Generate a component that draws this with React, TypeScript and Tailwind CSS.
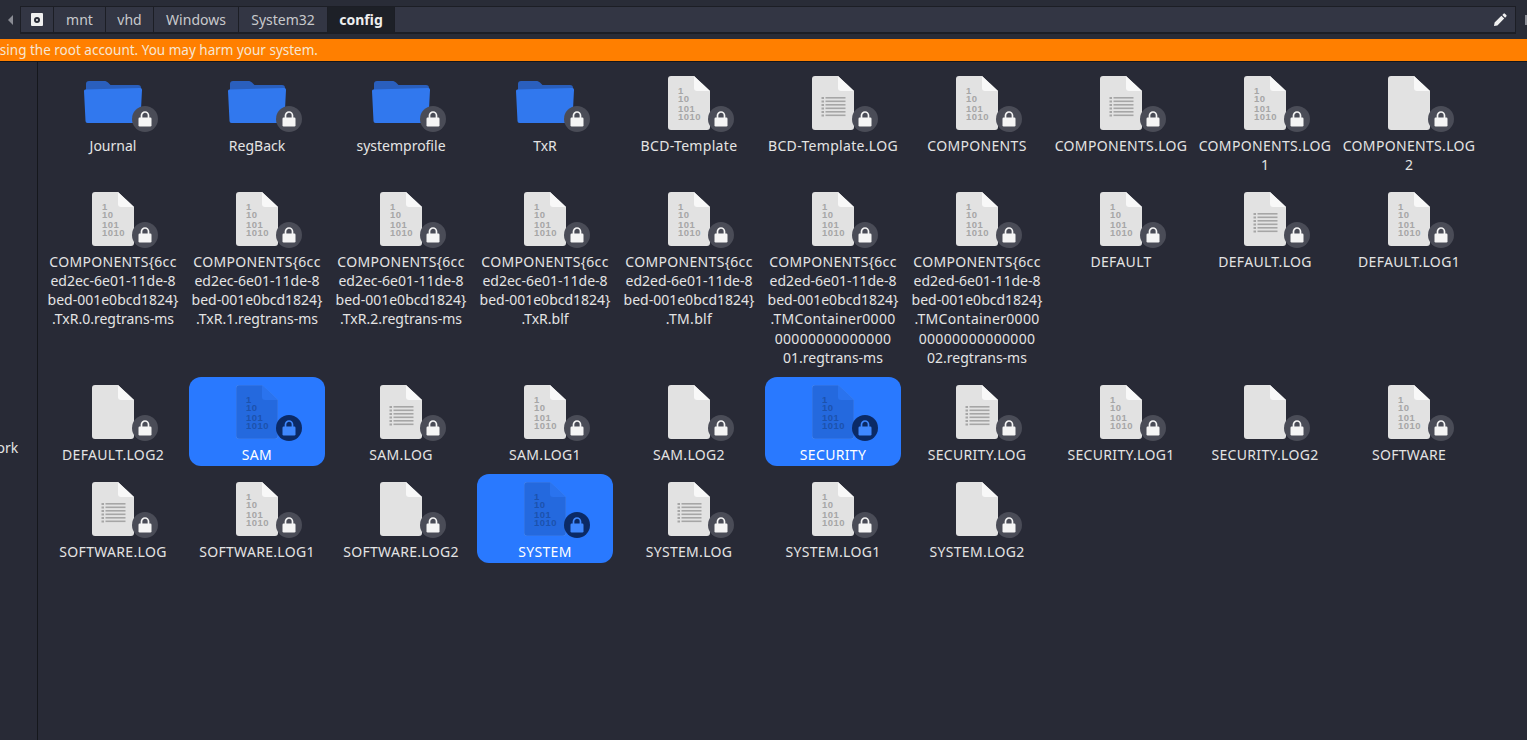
const font = { fontFamily: '"Noto Sans", sans-serif' }

type Kind = "folder" | "bin" | "log" | "blank"
type Item = { lines: string[]; kind: Kind; selected?: boolean }

const comp = (mid: string, last: string[]) => ["COMPONENTS{6cc", mid, "bed-001e0bcd1824}", ...last]

const items: Item[] = [
  { lines: ["Journal"], kind: "folder" },
  { lines: ["RegBack"], kind: "folder" },
  { lines: ["systemprofile"], kind: "folder" },
  { lines: ["TxR"], kind: "folder" },
  { lines: ["BCD-Template"], kind: "bin" },
  { lines: ["BCD-Template.LOG"], kind: "log" },
  { lines: ["COMPONENTS"], kind: "bin" },
  { lines: ["COMPONENTS.LOG"], kind: "log" },
  { lines: ["COMPONENTS.LOG", "1"], kind: "bin" },
  { lines: ["COMPONENTS.LOG", "2"], kind: "blank" },
  { lines: comp("ed2ec-6e01-11de-8", [".TxR.0.regtrans-ms"]), kind: "bin" },
  { lines: comp("ed2ec-6e01-11de-8", [".TxR.1.regtrans-ms"]), kind: "bin" },
  { lines: comp("ed2ec-6e01-11de-8", [".TxR.2.regtrans-ms"]), kind: "bin" },
  { lines: comp("ed2ec-6e01-11de-8", [".TxR.blf"]), kind: "bin" },
  { lines: comp("ed2ed-6e01-11de-8", [".TM.blf"]), kind: "bin" },
  { lines: comp("ed2ed-6e01-11de-8", [".TMContainer0000", "00000000000000", "01.regtrans-ms"]), kind: "bin" },
  { lines: comp("ed2ed-6e01-11de-8", [".TMContainer0000", "00000000000000", "02.regtrans-ms"]), kind: "bin" },
  { lines: ["DEFAULT"], kind: "bin" },
  { lines: ["DEFAULT.LOG"], kind: "log" },
  { lines: ["DEFAULT.LOG1"], kind: "bin" },
  { lines: ["DEFAULT.LOG2"], kind: "blank" },
  { lines: ["SAM"], kind: "bin", selected: true },
  { lines: ["SAM.LOG"], kind: "log" },
  { lines: ["SAM.LOG1"], kind: "bin" },
  { lines: ["SAM.LOG2"], kind: "blank" },
  { lines: ["SECURITY"], kind: "bin", selected: true },
  { lines: ["SECURITY.LOG"], kind: "log" },
  { lines: ["SECURITY.LOG1"], kind: "bin" },
  { lines: ["SECURITY.LOG2"], kind: "blank" },
  { lines: ["SOFTWARE"], kind: "bin" },
  { lines: ["SOFTWARE.LOG"], kind: "log" },
  { lines: ["SOFTWARE.LOG1"], kind: "bin" },
  { lines: ["SOFTWARE.LOG2"], kind: "blank" },
  { lines: ["SYSTEM"], kind: "bin", selected: true },
  { lines: ["SYSTEM.LOG"], kind: "log" },
  { lines: ["SYSTEM.LOG1"], kind: "bin" },
  { lines: ["SYSTEM.LOG2"], kind: "blank" },
]

function Folder() {
  return (
    <svg width="58" height="42" viewBox="0 0 58 42" className="block">
      <path d="M2 3a3 3 0 0 1 3-3h15c2 0 3 .6 4 1.500L26.500 4H54a3 3 0 0 1 3 3v8H2z" fill="#2a5fbd" />
      <path d="M1.200 8.500 55.500 7a2 2 0 0 1 2.500 2l-1.600 31a2 2 0 0 1-2 2H3.500a2 2 0 0 1-2-2L0 10a1.500 1.500 0 0 1 1.200-1.500z" fill="#3178ee" />
    </svg>
  )
}

function Doc({ kind, selected }: { kind: Kind; selected?: boolean }) {
  const body = selected ? "#2469de" : "#e2e2e2"
  const fold = selected ? "#2a73ee" : "#f8f8f8"
  const ink = selected ? "#1c52ad" : "#a6a6a6"
  const edge = selected ? "#4a8cf5" : "none"
  return (
    <svg width="42" height="54" viewBox="0 0 42 54" className="block">
      <path d="M3 0h23l16 15v36a3 3 0 0 1-3 3H3a3 3 0 0 1-3-3V3a3 3 0 0 1 3-3z" fill={body} stroke={edge} strokeWidth="0.600" />
      <path d="M26 0l16 15H29a3 3 0 0 1-3-3z" fill={fold} />
      {kind === "bin" && (
        <text opacity="0.99" fontFamily='"Liberation Sans", sans-serif' fontWeight="700" fontSize="9.500" letterSpacing="0.500" fill={ink}>
          <tspan x="10" y="18">1</tspan>
          <tspan x="10" y="26">10</tspan>
          <tspan x="10" y="36">101</tspan>
          <tspan x="10" y="44">1010</tspan>
        </text>
      )}
      {kind === "log" && (
        <g fill={ink}>
          {[21, 24.500, 28, 31.500, 35, 38.500].map((y) => (
            <g key={y}>
              <rect x="9.500" y={y} width="2.500" height="2" />
              <rect x="13.500" y={y} width="20" height="1.600" />
            </g>
          ))}
        </g>
      )}
    </svg>
  )
}

function LockBadge({ selected }: { selected?: boolean }) {
  const color = selected ? "#3f88ff" : "#f5f5f5"
  return (
    <div className={`flex h-[26px] w-[26px] items-center justify-center rounded-full ${selected ? "bg-[#0b2a66]" : "bg-[#4a4c57]"}`}>
      <svg width="14" height="16" viewBox="0 0 14 16" className="block">
        <path d="M3.500 7V4.500a3.500 3.500 0 0 1 7 0V7" fill="none" stroke={color} strokeWidth="1.700" />
        <rect x="0.500" y="6.500" width="13" height="9" rx="1.200" fill={color} />
      </svg>
    </div>
  )
}

function FileItem({ item }: { item: Item }) {
  const folder = item.kind === "folder"
  return (
    <div className={`flex flex-col items-center rounded-xl pb-[1.800px] pt-2 ${item.selected ? "bg-[#2979ff] text-white" : "text-[#e4e4e4]"}`}>
      <div className="relative flex h-[60px] w-full justify-center">
        <div className={folder ? "pt-[5px]" : ""}>
          {folder ? <Folder /> : <Doc kind={item.kind} selected={item.selected} />}
        </div>
        <div className="absolute left-[87px] top-[30px]">
          <LockBadge selected={item.selected} />
        </div>
      </div>
      <div className="text-center text-sm leading-[19.2px]">
        {item.lines.map((line, i) => (
          <div key={i} className={`whitespace-nowrap ${/[A-Z]{2}|000|BCD/.test(line) ? "tracking-[0.32px]" : ""}`}>{line}</div>
        ))}
      </div>
    </div>
  )
}

function Crumb({ children, width, active }: { children: React.ReactNode; width: string; active?: boolean }) {
  return (
    <div className={`flex h-full items-center justify-center border-r border-[#1c1e25] text-sm ${width} ${active ? "bg-[#1d2027] font-bold text-[#eeeeee]" : "text-[#c8c9cc]"}`}>
      {children}
    </div>
  )
}

export default function App() {
  return (
    <div style={font} className="flex h-[740px] w-[1527px] flex-col overflow-hidden bg-[#282a36]">
      {/* Path bar */}
      <div className="flex h-[39px] items-start bg-[#292c37] pt-[6px]">
        <div className="flex h-[27px] w-[20px] items-center justify-center">
          <div className="h-0 w-0 border-y-[5px] border-r-[5px] border-y-transparent border-r-[#8a8c94]" />
        </div>
        <div className="flex h-[28px] w-[1496px] items-center border border-b-2 border-[#1c1e25] bg-[#333644]">
          <div className="flex h-full w-[33px] items-center justify-center border-r border-[#1c1e25]">
            <div className="flex h-[13px] w-[12px] items-center justify-center rounded-[1px] bg-[#f0f0f0]">
              <div className="h-[6px] w-[6px] rounded-full border-2 border-[#292c37]" />
            </div>
          </div>
          <Crumb width="w-[52px]">mnt</Crumb>
          <Crumb width="w-[48px]">vhd</Crumb>
          <Crumb width="w-[85px]">Windows</Crumb>
          <Crumb width="w-[89px]">System32</Crumb>
          <Crumb width="w-[67px]" active>config</Crumb>
          <div className="flex-1" />
          <svg width="14" height="14" viewBox="0 0 14 14" className="mr-[8px] block">
            <path d="M1 13l.600-3.400 6.800-6.800 2.800 2.800-6.800 6.800zM9.300 1.900l1.200-1.200a1 1 0 0 1 1.400 0l1.400 1.400a1 1 0 0 1 0 1.400l-1.200 1.200z" fill="#f0f0f0" />
          </svg>
        </div>
        <div className="ml-[9px] mt-[9px] h-[10px] w-[2px] bg-[#8a8c94]" />
      </div>

      {/* Root warning */}
      <div className="flex h-[23px] items-center justify-start overflow-hidden border-b border-[#15171c] bg-[#ff7f00] text-[13.500px] text-[#f6e6d3]">
        <span className="ml-[-10px] whitespace-nowrap">Using the root account. You may harm your system.</span>
      </div>

      <div className="flex flex-1">
        {/* Sidebar */}
        <div className="flex w-[38px] flex-col overflow-hidden border-r border-[#15171c] pt-[376px]">
          <span className="ml-[-38px] whitespace-nowrap text-sm leading-[19.2px] text-[#e4e4e4]">Network</span>
        </div>

        {/* Icon grid */}
        <div className="grid grid-cols-[repeat(10,136px)] content-start items-start gap-2 pl-[7px] pt-[5.500px]">
          {items.map((item) => (
            <FileItem key={item.lines.join("")} item={item} />
          ))}
        </div>
      </div>
    </div>
  )
}
